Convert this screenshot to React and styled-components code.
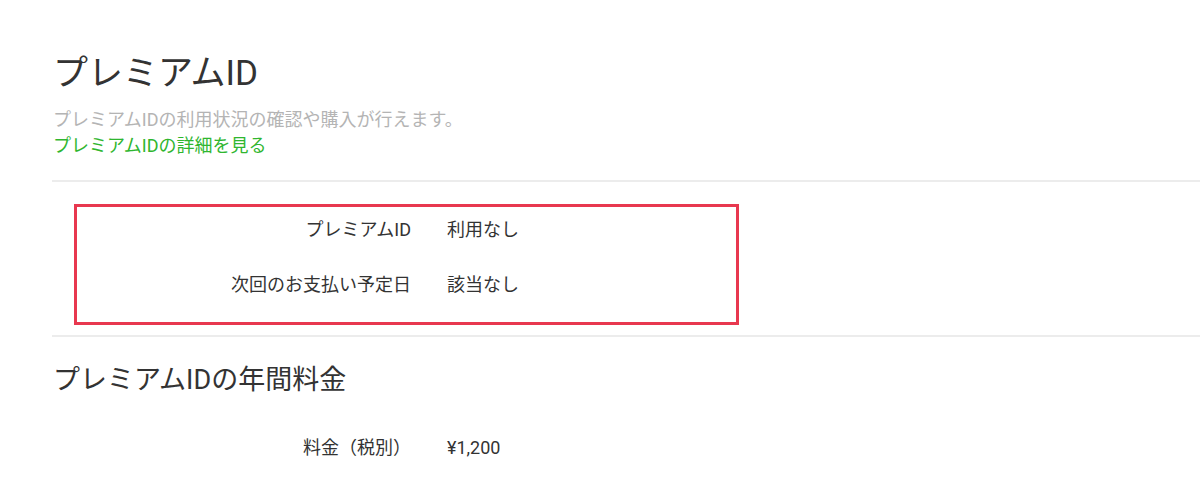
import React from "react";
import styled, { createGlobalStyle } from "styled-components";

const Global = createGlobalStyle`
  html, body { margin: 0; padding: 0; background: #ffffff; }
  body {
    font-family: Roboto, "Noto Sans CJK JP", "Noto Sans", sans-serif;
    color: #333333;
    overflow: hidden;
  }
`;

const Page = styled.main`
  padding: 54px 0 0 52px;
  width: 1148px;
`;

const Header = styled.header`
  display: flex;
  flex-direction: column;
  padding-left: 1px;
`;

const Title = styled.h1`
  margin: 0;
  font-size: 35px;
  line-height: 40px;
  font-weight: 400;
  color: #333333;
`;

const Lead = styled.p`
  margin: 13px 0 0;
  font-size: 18px;
  line-height: 26px;
  color: #b4b4b4;
`;

const DetailLink = styled.a`
  font-size: 18px;
  line-height: 26px;
  color: #2fb62f;
  text-decoration: none;
`;

const Divider = styled.hr`
  margin: ${(p) => p.$mt}px 0 0;
  border: 0;
  height: 2px;
  background: #ececec;
`;

const Highlight = styled.section`
  margin: 22px 0 0 22px;
  width: 665px;
  box-sizing: border-box;
  border: 3px solid #e8384f;
  padding: 3px 0 17px;
  display: flex;
  flex-direction: column;
  gap: 15px;
`;

const Row = styled.div`
  display: grid;
  grid-template-columns: ${(p) => p.$labelWidth}px 1fr;
  column-gap: 36px;
  font-size: 18px;
  line-height: 40px;
  color: #333333;
`;

const Label = styled.div`
  text-align: right;
`;

const Value = styled.div``;

const SectionTitle = styled.h2`
  margin: 25px 0 0 1px;
  font-size: 27px;
  line-height: 36px;
  font-weight: 400;
  color: #333333;
`;

const PriceTable = styled.div`
  margin-top: 30px;
`;

export default function App() {
  return (
    <>
      <Global />
      <Page>
        <Header>
          <Title>プレミアムID</Title>
          <Lead>プレミアムIDの利用状況の確認や購入が行えます。</Lead>
          <DetailLink href="#">プレミアムIDの詳細を見る</DetailLink>
        </Header>
        <Divider $mt={21} />
        <Highlight>
          <Row $labelWidth={334}>
            <Label>プレミアムID</Label>
            <Value>利用なし</Value>
          </Row>
          <Row $labelWidth={334}>
            <Label>次回のお支払い予定日</Label>
            <Value>該当なし</Value>
          </Row>
        </Highlight>
        <Divider $mt={10} />
        <SectionTitle>プレミアムIDの年間料金</SectionTitle>
        <PriceTable>
          <Row $labelWidth={359}>
            <Label>料金（税別）</Label>
            <Value>¥1,200</Value>
          </Row>
        </PriceTable>
      </Page>
    </>
  );
}
